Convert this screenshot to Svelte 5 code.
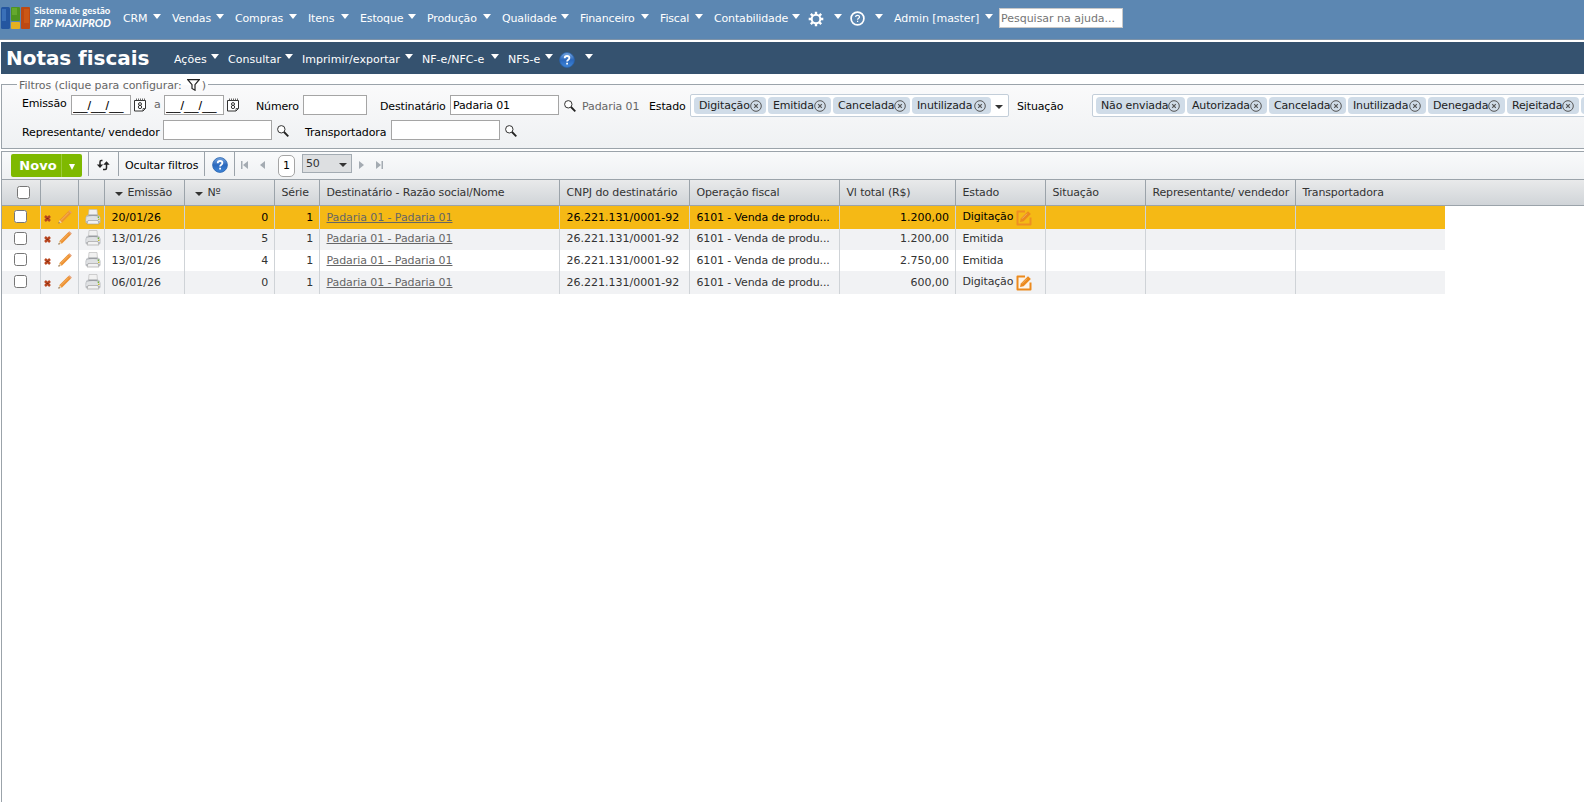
<script lang="ts">
  // width covers the label, its arrow and the gap before the next item
  const mainMenu = [
    { label: 'CRM', width: 49 },
    { label: 'Vendas', width: 63 },
    { label: 'Compras', width: 73 },
    { label: 'Itens', width: 52 },
    { label: 'Estoque', width: 67 },
    { label: 'Produção', width: 75 },
    { label: 'Qualidade', width: 78 },
    { label: 'Financeiro', width: 80 },
    { label: 'Fiscal', width: 54 },
    { label: 'Contabilidade', width: 97 }
  ];

  const pageMenu = [
    { label: 'Ações', width: 54 },
    { label: 'Consultar', width: 74 },
    { label: 'Imprimir/exportar', width: 120 },
    { label: 'NF-e/NFC-e', width: 86 },
    { label: 'NFS-e', width: 54 }
  ];

  const estados = [
    { label: 'Digitação', width: 72 },
    { label: 'Emitida', width: 63 },
    { label: 'Cancelada', width: 77 },
    { label: 'Inutilizada', width: 79 }
  ];

  const situacoes = [
    { label: 'Não enviada', width: 89 },
    { label: 'Autorizada', width: 80 },
    { label: 'Cancelada', width: 77 },
    { label: 'Inutilizada', width: 78 },
    { label: 'Denegada', width: 77 },
    { label: 'Rejeitada', width: 72 },
    { label: '', width: 80 }
  ];

  const columns = [
    { key: 'check', label: '', width: 39 },
    { key: 'edit', label: '', width: 38 },
    { key: 'print', label: '', width: 26 },
    { key: 'emissao', label: 'Emissão', width: 80, sort: true },
    { key: 'numero', label: 'Nº', width: 90, sort: true, right: true },
    { key: 'serie', label: 'Série', width: 45, right: true },
    { key: 'destinatario', label: 'Destinatário - Razão social/Nome', width: 240 },
    { key: 'cnpj', label: 'CNPJ do destinatário', width: 130 },
    { key: 'operacao', label: 'Operação fiscal', width: 150 },
    { key: 'total', label: 'Vl total (R$)', width: 116, right: true },
    { key: 'estado', label: 'Estado', width: 90 },
    { key: 'situacao', label: 'Situação', width: 100 },
    { key: 'representante', label: 'Representante/ vendedor', width: 150 },
    { key: 'transportadora', label: 'Transportadora', width: 149 }
  ];

  const common = {
    serie: '1',
    destinatario: 'Padaria 01 - Padaria 01',
    cnpj: '26.221.131/0001-92',
    operacao: '6101 - Venda de produ...'
  };

  const rows: Record<string, string>[] = [
    { ...common, emissao: '20/01/26', numero: '0', total: '1.200,00', estado: 'Digitação' },
    { ...common, emissao: '13/01/26', numero: '5', total: '1.200,00', estado: 'Emitida' },
    { ...common, emissao: '13/01/26', numero: '4', total: '2.750,00', estado: 'Emitida' },
    { ...common, emissao: '06/01/26', numero: '0', total: '600,00', estado: 'Digitação' }
  ];

  let selected = 0;
  let destinatario = 'Padaria 01';
</script>

{#snippet magnifier()}
  <svg class="magnifier" width="12" height="12" viewBox="0 0 12 12">
    <circle cx="4.3" cy="4.3" r="3.7" fill="#fff" stroke="#333" />
    <path d="M7 7l4.3 4.3" stroke="#222" stroke-width="1.8" />
  </svg>
{/snippet}

{#snippet calendar()}
  <svg class="calendar" width="13" height="14" viewBox="0 0 13 14">
    <path d="M.5 2.500h11v8L9 13H.5z" fill="#fff" stroke="#333" />
    <path d="M2.500 .5v2M4.500 .5v2M6.500 .5v2M8.500 .5v2M10.500 .5v2" stroke="#444" stroke-width=".8" />
    <ellipse cx="6" cy="6" rx="1.500" ry="1.400" fill="none" stroke="#333" />
    <ellipse cx="6" cy="9" rx="1.700" ry="1.600" fill="none" stroke="#333" />
    <path d="M9 13v-2.500h2.500" fill="none" stroke="#333" stroke-width=".8" />
  </svg>
{/snippet}

{#snippet helpBall()}
  <svg class="help-ball" width="16" height="16" viewBox="0 0 16 16">
    <defs>
      <linearGradient id="ball" x1="0" y1="0" x2="0" y2="1">
        <stop offset="0" stop-color="#7aa9e2" />
        <stop offset=".5" stop-color="#2b68bd" />
        <stop offset="1" stop-color="#3f87da" />
      </linearGradient>
    </defs>
    <circle cx="8" cy="8" r="7.4" fill="url(#ball)" stroke="#2a63ad" stroke-width=".8" />
    <path d="M5.700 6.200c0-3 4.700-2.800 4.700-.2 0 1.700-2.300 1.700-2.300 3.500M8.100 10.700v1.800" fill="none" stroke="#fff" stroke-width="1.800" />
  </svg>
{/snippet}

{#snippet chips(list)}
  {#each list as chip}
    <span class="chip" style="width: {chip.width}px">
      {chip.label}
      <svg width="12" height="12" viewBox="0 0 12 12">
        <circle cx="6" cy="6" r="5.3" fill="none" stroke="#555" />
        <path d="M4.200 4.200l3.600 3.600M7.800 4.200L4.200 7.800" stroke="#555" stroke-width="1.200" />
      </svg>
    </span>
  {/each}
{/snippet}

<div class="page">
  <header class="topbar">
    <svg class="logo" width="30" height="23" viewBox="0 0 30 23">
      <rect x="0" y="0" width="9" height="22" rx="1.500" fill="#2456a0" />
      <rect x="1" y="2" width="4" height="12" fill="#3a70b8" />
      <rect x="10" y="0" width="9" height="14" rx="1" fill="#4f9420" />
      <rect x="11" y="1" width="5" height="7" fill="#65a82e" />
      <rect x="10" y="15" width="9" height="7" rx="1" fill="#e5b021" />
      <rect x="20" y="0" width="9" height="22" rx="1" fill="#bd4912" />
      <rect x="23" y="2" width="5" height="14" fill="#cb5715" />
    </svg>
    <div class="brand">
      <span>Sistema de gestão</span>
      <em>ERP MAXIPROD</em>
    </div>
    <nav>
      {#each mainMenu as item}
        <a href="#menu" style="width: {item.width}px">{item.label}<i class="arrow"></i></a>
      {/each}
    </nav>
    <svg class="gear" width="16" height="16" viewBox="0 0 16 16">
      <path
        d="M8 .7v3M8 12.300v3M.7 8h3M12.300 8h3M2.800 2.800l2.200 2.200M11 11l2.200 2.200M2.800 13.200L5 11M11 5l2.200-2.200"
        stroke="#fff"
        stroke-width="2.400"
      />
      <circle cx="8" cy="8" r="4.300" fill="#5c87b2" stroke="#fff" stroke-width="2" />
    </svg>
    <i class="arrow gear-arrow"></i>
    <svg class="help-ring" width="15" height="15" viewBox="0 0 15 15">
      <circle cx="7.500" cy="7.500" r="6.400" fill="none" stroke="#fff" stroke-width="1.700" />
      <path d="M5.600 6.100c0-2.400 3.900-2.300 3.900-.2 0 1.400-1.900 1.400-1.900 2.800M7.600 9.700v1.400" fill="none" stroke="#fff" stroke-width="1.200" />
    </svg>
    <i class="arrow ring-arrow"></i>
    <a class="admin" href="#admin">Admin [master]<i class="arrow"></i></a>
    <input class="help-search" placeholder="Pesquisar na ajuda..." />
  </header>

  <div class="titlebar">
    <h1>Notas fiscais</h1>
    <nav>
      {#each pageMenu as item}
        <a href="#menu" style="width: {item.width}px">{item.label}<i class="arrow"></i></a>
      {/each}
    </nav>
    {@render helpBall()}
    <i class="arrow ball-arrow"></i>
  </div>

  <section class="filters">
    <div class="legend">
      Filtros (clique para configurar:
      <svg width="13" height="12" viewBox="0 0 13 12">
        <path d="M.8.700h11.400L8 5.600v5.600L5 9.500V5.600z" fill="#fff" stroke="#222" stroke-width="1.200" />
      </svg>
      )
    </div>
    <div class="filter-row first">
      <label class="l-emissao" for="de">Emissão</label>
      <input id="de" class="date" value="__/__/__" />
      {@render calendar()}
      <span class="until">a</span>
      <input class="date" value="__/__/__" />
      {@render calendar()}
      <label class="l-numero low" for="numero">Número</label>
      <input id="numero" class="number" />
      <label class="l-dest low" for="dest">Destinatário</label>
      <input id="dest" class="text" bind:value={destinatario} />
      {@render magnifier()}
      <span class="found low">Padaria 01</span>
      <span class="l-estado low">Estado</span>
      <div class="multi estado">{@render chips(estados)}<i class="arrow dark"></i></div>
      <span class="l-situacao low">Situação</span>
      <div class="multi situacao">{@render chips(situacoes)}</div>
    </div>
    <div class="filter-row second">
      <label class="l-rep low" for="rep">Representante/ vendedor</label>
      <input id="rep" class="text" />
      {@render magnifier()}
      <label class="l-transp low" for="transp">Transportadora</label>
      <input id="transp" class="text" />
      {@render magnifier()}
    </div>
  </section>

  <section class="grid">
    <div class="toolbar">
      <button class="new"><b>Novo</b><span><i class="arrow"></i></span></button>
      <div class="tool refresh">
        <svg width="14" height="12" viewBox="0 0 14 12">
          <path d="M6.500 1.500H5.300Q4 1.500 4 3v5M7 10.500h2.200q1.300 0 1.300-1.500V4" fill="none" stroke="#222" stroke-width="1.500" />
          <path d="M.8 5.500h6.400L4 9zM7.300 5.800h6.400L10.500 2.300z" fill="#222" />
        </svg>
      </div>
      <div class="tool hide">Ocultar filtros</div>
      <div class="tool help">{@render helpBall()}</div>
      <div class="tool pager">
        <svg width="8" height="8" viewBox="0 0 8 8"><path d="M0 0h1.500v8H0zM7 0v8L2 4z" fill="#a4abb2" /></svg>
        <svg class="prev" width="6" height="8" viewBox="0 0 6 8"><path d="M5 0v8L0 4z" fill="#a4abb2" /></svg>
        <span class="current">1</span>
        <div class="size">50<i class="arrow dark"></i></div>
        <svg class="next" width="6" height="8" viewBox="0 0 6 8"><path d="M0 0v8l5-4z" fill="#a4abb2" /></svg>
        <svg class="last" width="8" height="8" viewBox="0 0 8 8"><path d="M5.500 0H7v8H5.500zM0 0v8l5-4z" fill="#a4abb2" /></svg>
      </div>
    </div>

    <div class="row head">
      {#each columns as col}
        <div class="cell {col.key}" style="width: {col.width}px">
          {#if col.key === 'check'}
            <input type="checkbox" aria-label="Todos" />
          {:else}
            {#if col.sort}<i class="arrow dark"></i>{/if}{col.label}
          {/if}
        </div>
      {/each}
    </div>

    {#each rows as row, i}
      <div class="row data" class:selected={i === selected} class:odd={i % 2 === 1} class:tall={i === 3}>
        {#each columns as col}
          <div class="cell {col.key}" class:right={col.right} style="width: {col.width}px">
            {#if col.key === 'check'}
              <input type="checkbox" aria-label="Selecionar" />
            {:else if col.key === 'edit'}
              <svg class="remove" width="7" height="7" viewBox="0 0 7 7">
                <path d="M1 1l5 5M6 1L1 6" stroke="#b8461f" stroke-width="2.500" />
                <path d="M2.500 3.500h2" stroke="#7d2a12" />
              </svg>
              <svg class="pencil" width="14" height="14" viewBox="0 0 14 14">
                <path d="M.5 13.500l1-3.500L10.500 1l2.500 2.500L4 12.500z" fill="#ec9030" />
                <path d="M.5 13.500l1-3.500L4 12.500z" fill="#f0d6ae" />
                <path d="M.5 13.500l.4-1.500 1 1z" fill="#333" />
                <path d="M10.500 1l1-.8 2.300 2.300-.8 1z" fill="#e39a72" />
                <path d="M2.700 10.700l8-8" stroke="#f9be72" stroke-width=".8" />
              </svg>
            {:else if col.key === 'print'}
              <svg width="16" height="16" viewBox="0 0 16 16">
                <path d="M4 .5h8l.5 6h-9z" fill="#f1f1f1" stroke="#bdbdbd" stroke-width=".7" />
                <path d="M2.500 5.500Q1 6.500.5 9V13q0 1 1 1h13q1 0 1-1V9Q15 6.500 13.500 5.500v1h-11z" fill="#b9bcc0" />
                <path d="M1.500 8Q8 6 14.500 8l.5 4H1z" fill="#dfe1e3" />
                <path d="M3.500 5.500h9V7h-9z" fill="#9b9ea3" />
                <path d="M3 11.500h10l1 3.500H2z" fill="#f2f2f2" stroke="#999" stroke-width=".6" />
                <path d="M12.700 7.500H14V9h-1.300z" fill="#6db43d" />
                <path d="M13 9.700h1.500v1.200H13z" fill="#c9bf2a" />
              </svg>
            {:else if col.key === 'destinatario'}
              <a href="#nota">{row.destinatario}</a>
            {:else if col.key === 'estado' && row.estado === 'Digitação'}
              <span class="typing">{row.estado}</span>
              <svg class="compose" width="16" height="16" viewBox="0 0 16 16">
                <path class="frame" d="M9 1.500H1.500v13h13V7.500" />
                <path class="pen" d="M4 12l.8-3.600L12 1.200l2.900 2.800L7.600 11.200z" />
                <path d="M6 8.700L11 3.700" stroke="#fff" stroke-width=".8" opacity=".4" />
              </svg>
            {:else}
              {row[col.key] ?? ''}
            {/if}
          </div>
        {/each}
      </div>
    {/each}
  </section>
</div>

<style>
  :global(body) {
    margin: 0;
    overflow: hidden;
  }

  .page {
    display: flex;
    flex-direction: column;
    height: 802px;
    overflow: hidden;
    background: #fff;
    font-family: Verdana, 'DejaVu Sans', sans-serif;
    font-size: 11px;
    letter-spacing: -0.15px;
    color: #000;
    white-space: nowrap;
  }

  .page *,
  .page {
    box-sizing: border-box;
  }

  svg {
    display: block;
    flex: none;
  }

  a {
    color: inherit;
    text-decoration: none;
  }

  input {
    margin: 0;
    padding: 0 2px;
    border: 1px solid #a5a5a5;
    background: #fff;
    font: inherit;
    letter-spacing: inherit;
    flex: none;
  }

  .arrow {
    flex: none;
    display: block;
    border: 4px solid transparent;
    border-top: 5px solid #fff;
    border-bottom: 0;
  }

  .arrow.dark {
    border-top: 4px solid #333;
  }

  /* top menu */
  .topbar {
    flex: none;
    display: flex;
    align-items: flex-start;
    height: 40px;
    border-bottom: 1px solid #7e93a8;
    background: #5c87b2;
    color: #fff;
  }

  .logo {
    margin: 7px 0 0 1px;
  }

  .brand {
    display: flex;
    flex-direction: column;
    width: 88px;
    margin: 5px 0 0 3px;
    font-family: Lato, sans-serif;
    font-size: 9.5px;
    font-weight: bold;
    line-height: 12px;
    letter-spacing: 0;
  }

  .brand em {
    font-size: 11px;
  }

  nav {
    display: flex;
  }

  nav a,
  .admin {
    display: flex;
    justify-content: space-between;
    padding-right: 11px;
    line-height: 14px;
    flex: none;
  }

  .topbar nav {
    margin-left: 1px;
  }

  .topbar nav a,
  .admin {
    padding-top: 12px;
  }

  nav .arrow,
  .admin .arrow {
    margin-top: 2px;
  }

  .gear {
    margin: 11px 0 0 -3px;
  }

  .gear-arrow {
    margin: 14px 0 0 10px;
  }

  .help-ring {
    margin: 11px 0 0 8px;
  }

  .ring-arrow {
    margin: 14px 0 0 10px;
  }

  .admin {
    width: 105px;
    margin-left: 11px;
    padding-right: 6px;
    letter-spacing: -0.05px;
  }

  .help-search {
    width: 124px;
    height: 20px;
    margin-top: 8px;
    padding-left: 1px;
    border-color: #c8c8c8;
    letter-spacing: -0.02px;
  }

  .help-search::placeholder {
    color: #757575;
  }

  /* page title */
  .titlebar {
    flex: none;
    display: flex;
    height: 32px;
    margin: 2px 0 0 1px;
    background: #35526f;
    color: #fff;
  }

  h1 {
    width: 167px;
    margin: 0;
    padding: 0 0 0 5px;
    font-size: 20px;
    line-height: 32px;
    letter-spacing: -0.05px;
    flex: none;
  }

  .titlebar nav {
    margin: 10px 0 0 6px;
  }

  .titlebar nav a {
    padding-right: 9px;
    line-height: 15px;
    letter-spacing: 0.03px;
  }

  .titlebar .help-ball {
    margin-top: 10px;
    margin-left: -3px;
  }

  .ball-arrow {
    margin: 12px 0 0 10px;
  }

  /* filters */
  .filters {
    flex: none;
    height: 65px;
    margin: 10px 0 0 1px;
    border: 1px solid #9ba3aa;
    border-right: 0;
    background: linear-gradient(#fafafb, #eff1f3);
  }

  .legend {
    display: flex;
    align-items: center;
    gap: 5px;
    width: 191px;
    height: 14px;
    margin: -7px 0 0 15px;
    padding: 1px 0 0 2px;
    background: linear-gradient(#fff 50%, #fafafb 50%);
    color: #666;
    letter-spacing: -0.08px;
  }

  .legend svg {
    margin: -1px -3px 0 0;
  }

  .filter-row {
    display: flex;
    align-items: flex-start;
    padding-left: 20px;
  }

  .first {
    height: 26px;
    margin-top: 3px;
  }

  .second {
    height: 20px;
  }

  .filter-row label,
  .filter-row > span {
    flex: none;
    line-height: 18px;
  }

  .filter-row .low {
    padding-top: 3px;
  }

  .filter-row > input {
    height: 20px;
  }

  .second > input {
    margin-top: -1px;
  }

  .l-emissao {
    width: 49px;
  }

  .date {
    width: 60px;
    padding: 0 1px;
    font-family: 'Liberation Sans', Arial, sans-serif;
    font-size: 13px;
    letter-spacing: 0;
  }

  .calendar {
    margin: 3px -1px 0 3px;
  }

  .until {
    width: 10px;
    margin-left: 8px;
    padding-top: 1px;
    color: #666;
  }

  .l-numero {
    width: 47px;
    margin-left: 17px;
  }

  .number {
    width: 64px;
  }

  .l-dest {
    width: 70px;
    margin-left: 13px;
  }

  .text {
    width: 109px;
  }

  .magnifier {
    margin: 5px 0 0 5px;
  }

  .second .magnifier {
    margin-top: 4px;
  }

  .found {
    width: 67px;
    margin-left: 6px;
    color: #666;
    letter-spacing: -0.1px;
  }

  .l-estado {
    width: 41px;
  }

  .multi {
    display: flex;
    align-items: center;
    gap: 2px;
    height: 23px;
    margin-top: -1px;
    padding-left: 3px;
    border: 1px solid #c3ced9;
    border-radius: 2px;
    background: #fff;
    flex: none;
  }

  .estado.multi {
    width: 319px;
  }

  .estado .arrow {
    margin: 3px 0 0 2px;
  }

  .situacao.multi {
    width: 640px;
  }

  .l-situacao {
    width: 75px;
    margin-left: 8px;
  }

  .chip {
    display: flex;
    align-items: center;
    justify-content: space-between;
    height: 17px;
    padding: 0 5px 0 5px;
    border-radius: 4px;
    background: #d0dce8;
    color: #222;
    flex: none;
  }

  .l-rep {
    width: 141px;
    letter-spacing: -0.1px;
  }

  .l-transp {
    width: 86px;
    margin-left: 16px;
  }

  /* grid */
  .grid {
    flex: 1;
    margin: 2px 0 0 1px;
    border-top: 1px solid #9ba3aa;
    border-left: 1px solid #9ba3aa;
  }

  .toolbar {
    display: flex;
    height: 27px;
    padding-left: 9px;
    background: linear-gradient(#f9fafb, #eff1f3);
  }

  .new {
    display: flex;
    align-items: stretch;
    width: 71px;
    height: 23px;
    margin: 2px 6px 0 0;
    padding: 0;
    border: 0;
    border-radius: 2px;
    background: #7eb900;
    color: #fff;
    font: inherit;
    flex: none;
  }

  .new b {
    width: 51px;
    font-size: 13px;
    line-height: 23px;
    border-right: 1px solid #9bcb38;
    padding-left: 4px;
    letter-spacing: 0.1px;
  }

  .new span {
    display: flex;
    flex: 1;
    align-items: center;
    justify-content: center;
  }

  .new .arrow {
    margin-top: 2px;
    border-width: 6px 3.5px 0;
  }

  .tool {
    display: flex;
    align-items: center;
    height: 24px;
    border-left: 1px solid #9ba3aa;
    flex: none;
  }

  .refresh {
    width: 30px;
    padding-left: 7px;
  }

  .refresh svg {
    margin-top: 1px;
  }

  .hide {
    width: 86px;
    padding: 2px 0 0 6px;
    letter-spacing: -0.1px;
  }

  .help {
    width: 30px;
    padding: 2px 0 0 7px;
  }

  .pager {
    padding: 1px 0 0 6px;
  }

  .prev {
    margin-left: 11px;
  }

  .current {
    width: 17px;
    height: 22px;
    margin: 2px 7px 0 12px;
    border: 1px solid #a5a5a5;
    border-radius: 5px;
    background: #fff;
    line-height: 20px;
    text-align: center;
  }

  .size {
    display: flex;
    align-items: center;
    justify-content: space-between;
    width: 50px;
    height: 19px;
    margin: -2px 7px 0 0;
    padding: 0 4px 0 3px;
    border: 1px solid #a3abb2;
    background: #dddfe1;
    color: #333;
  }

  .size .arrow {
    margin-top: 3px;
  }

  .last {
    margin-left: 11px;
  }

  .row {
    display: flex;
    color: #333;
  }

  .cell {
    display: flex;
    align-items: center;
    padding: 0 6px;
    border-right: 1px solid #cfd3d7;
    overflow: hidden;
    flex: none;
    padding-left: 6.5px;
  }

  .cell:last-child {
    border-right: 0;
  }

  .head {
    height: 27px;
    border-top: 1px solid #9ba3aa;
    border-bottom: 1px solid #9ba3aa;
    background: linear-gradient(#e9eaeb, #d0d4d8);
  }

  .head .cell {
    border-right-color: #9ba3aa;
    padding-bottom: 1px;
  }

  .head .cnpj {
    letter-spacing: -0.08px;
  }

  .head .arrow {
    margin: 3px 5px 0 3px;
  }

  .data {
    width: 1443px;
    height: 21px;
    background: #fff;
  }

  .data.odd {
    background: #f1f2f4;
  }

  .data.tall {
    height: 23px;
  }

  .data.selected {
    height: 23px;
    background: #f5b915;
    color: #000;
  }

  .data .cell {
    padding-bottom: 1px;
  }

  .data.odd .cell {
    padding-bottom: 2px;
  }

  .data.tall .cell {
    padding-bottom: 1px;
  }

  .right {
    justify-content: flex-end;
  }

  .destinatario a {
    color: #666;
    text-decoration: underline;
  }

  .data .destinatario {
    letter-spacing: -0.08px;
  }

  .data .cnpj,
  .data .emissao,
  .data .total {
    letter-spacing: 0;
  }

  .data .operacao {
    letter-spacing: -0.13px;
  }

  .check input {
    width: 13px;
    height: 13px;
    margin: -1px 0 0 5.5px;
  }

  .head .check input {
    margin: 1px 0 0 8.5px;
  }

  .remove {
    margin: 2px 7px 0 -3.5px;
  }

  .pencil {
    margin-top: -1px;
  }

  .print svg {
    margin: -1px 0 0 -0.5px;
  }

  .typing {
    width: 54px;
    margin-top: -1px;
  }

  .compose {
    margin: 1px 0 0 -0.5px;
  }

  .compose .frame {
    fill: #fdf5ea;
    stroke: #ec8a1d;
    stroke-width: 2;
    stroke-linejoin: round;
  }

  .compose .pen {
    fill: #ec8a1d;
  }

  .selected .compose .frame {
    fill: none;
    stroke: #ee8f22;
  }

  .selected .pencil {
    opacity: 0.9;
  }
</style>
